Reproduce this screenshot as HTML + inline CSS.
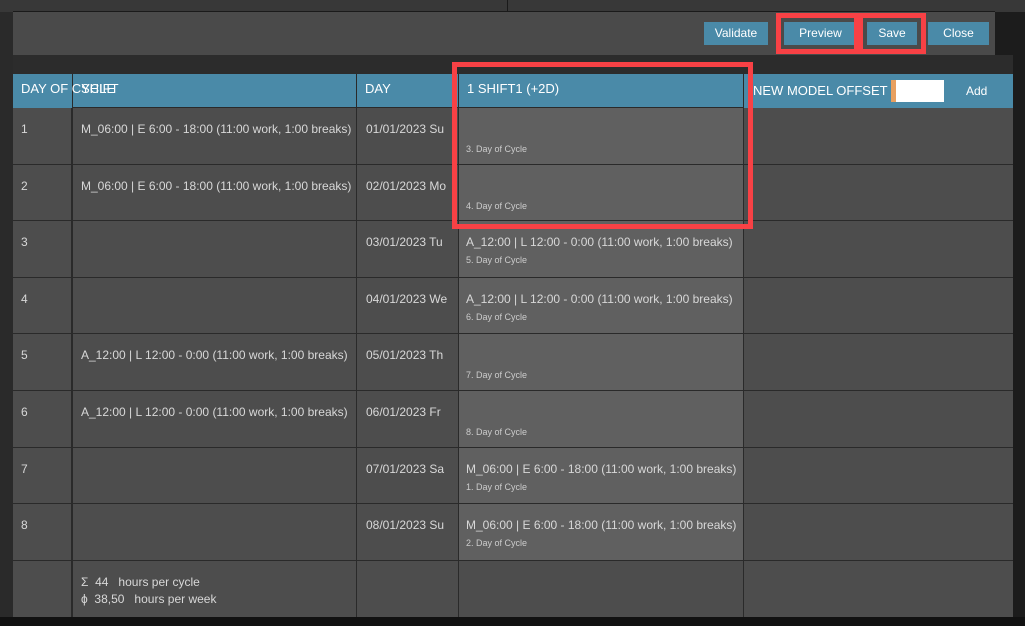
<!DOCTYPE html>
<html><head><style>
*{margin:0;padding:0;box-sizing:border-box}
body{width:1025px;height:626px;background:#1c1c1c;position:relative;overflow:hidden;font-family:"Liberation Sans",sans-serif;color:#d8d8d8}
.abs{position:absolute}
.cell{position:absolute;border-right:1px solid #2a2a2a;border-bottom:1px solid #2a2a2a;font-size:12px}
.hd{background:#4a8aa8;color:#fff;font-size:13px;padding:7px 0 0 8px;white-space:nowrap}
.btn{position:absolute;top:22px;height:23px;background:#4a8aa8;color:#fff;font-size:12px;text-align:center;line-height:23px}
.red{position:absolute;border:5px solid #f84145}
.sm{font-size:9px;color:#ccc;position:absolute;left:7px}
</style></head><body>
<div class="abs" style="left:0;top:0;width:13px;height:626px;background:#2a2a2a"></div>
<div class="abs" style="left:0;top:0;width:1025px;height:12px;background:#383838"></div>
<div class="abs" style="left:13px;top:11px;width:982px;height:1px;background:#1a1a1a"></div>
<div class="abs" style="left:507px;top:0;width:1px;height:11px;background:#1a1a1a"></div>
<div class="abs" style="left:13px;top:12px;width:982px;height:43px;background:#4a4a4a"></div>
<div class="abs" style="left:13px;top:55px;width:1000px;height:19px;background:#2c2c2c"></div>
<div class="btn" style="left:704px;width:64px">Validate</div>
<div class="btn" style="left:784px;width:73px">Preview</div>
<div class="btn" style="left:867px;width:50px">Save</div>
<div class="btn" style="left:928px;width:61px">Close</div>
<div class="abs" style="left:13px;top:74px;width:1000px;height:543px;background:#4d4d4d"></div>
<div class="cell hd" style="left:13px;top:74px;width:59px;height:34px;border:none"></div>
<div class="cell hd" style="left:72px;top:74px;width:285px;height:34px;border-left:1px solid #2a2a2a;border-right:1px solid #2a2a2a">SHIFT</div>
<div class="abs" style="left:13px;top:74px;color:#fff;font-size:13px;padding:7px 0 0 8px;white-space:nowrap;z-index:3">DAY OF CYCLE</div>
<div class="cell hd" style="left:357px;top:74px;width:102px;height:34px">DAY</div>
<div class="cell hd" style="left:459px;top:74px;width:285px;height:34px">1 SHIFT1 (+2D)</div>
<div class="cell hd" style="left:744px;top:74px;width:269px;height:34px;border:none;padding-left:9px;padding-top:9px">NEW MODEL OFFSET
<span class="abs" style="left:147px;top:6px;width:53px;height:22px;background:#fff;border-left:5px solid #e8a060"></span>
<span class="abs" style="left:222px;top:10px;font-size:12px">Add</span></div>
<div id="rows"></div>
<script>
var d=[["1","M_06:00 | E 6:00 - 18:00 (11:00 work, 1:00 breaks)","01/01/2023 Su","","3"],
["2","M_06:00 | E 6:00 - 18:00 (11:00 work, 1:00 breaks)","02/01/2023 Mo","","4"],
["3","","03/01/2023 Tu","A_12:00 | L 12:00 - 0:00 (11:00 work, 1:00 breaks)","5"],
["4","","04/01/2023 We","A_12:00 | L 12:00 - 0:00 (11:00 work, 1:00 breaks)","6"],
["5","A_12:00 | L 12:00 - 0:00 (11:00 work, 1:00 breaks)","05/01/2023 Th","","7"],
["6","A_12:00 | L 12:00 - 0:00 (11:00 work, 1:00 breaks)","06/01/2023 Fr","","8"],
["7","","07/01/2023 Sa","M_06:00 | E 6:00 - 18:00 (11:00 work, 1:00 breaks)","1"],
["8","","08/01/2023 Su","M_06:00 | E 6:00 - 18:00 (11:00 work, 1:00 breaks)","2"]];
var h="",tops=[108,165,221,278,334,391,448,504,561];
for(var i=0;i<8;i++){var t=tops[i],ht=tops[i+1]-t,r=d[i];
h+='<div class="cell" style="left:13px;top:'+t+'px;width:59px;height:'+ht+'px;padding:14px 0 0 8px">'+r[0]+'</div>';
h+='<div class="cell" style="left:72px;top:'+t+'px;width:285px;height:'+ht+'px;padding:14px 0 0 8px;border-left:1px solid #2a2a2a">'+r[1]+'</div>';
h+='<div class="cell" style="left:357px;top:'+t+'px;width:102px;height:'+ht+'px;padding:14px 0 0 9px;white-space:nowrap;overflow:hidden">'+r[2]+'</div>';
h+='<div class="cell" style="left:459px;top:'+t+'px;width:285px;height:'+ht+'px;background:#606060;padding:14px 0 0 7px;white-space:nowrap">'+r[3]+'<span class="sm" style="top:'+(r[3]?34:36)+'px">'+r[4]+'. Day of Cycle</span></div>';
h+='<div class="cell" style="left:744px;top:'+t+'px;width:269px;height:'+ht+'px;border-right:none"></div>';}
document.getElementById("rows").innerHTML=h;
</script>
<div class="cell" style="left:13px;top:561px;width:59px;height:56px;border-bottom:none"></div>
<div class="cell" style="left:72px;top:561px;width:285px;height:56px;padding:13px 0 0 8px;line-height:17px;border-left:1px solid #2a2a2a;border-bottom:none">Σ&nbsp; 44&nbsp;&nbsp; hours per cycle<br>ϕ&nbsp; 38,50&nbsp;&nbsp; hours per week</div>
<div class="cell" style="left:357px;top:561px;width:102px;height:56px;border-bottom:none"></div>
<div class="cell" style="left:459px;top:561px;width:285px;height:56px;border-bottom:none"></div>
<div class="abs" style="left:0;top:617px;width:1025px;height:9px;background:#111"></div>
<div class="red" style="left:452px;top:62px;width:301px;height:167px"></div>
<div class="red" style="left:776px;top:13px;width:83px;height:41px"></div>
<div class="red" style="left:858px;top:13px;width:68px;height:41px"></div>
</body></html>
